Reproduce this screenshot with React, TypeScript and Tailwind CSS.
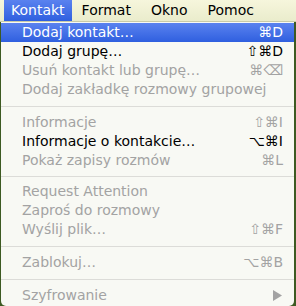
import React from "react";

type Item =
  | { kind: "item"; label: string; shortcut?: string; disabled?: boolean; active?: boolean; arrow?: boolean }
  | { kind: "sep"; h: string };

const items: Item[] = [
  { kind: "item", label: "Dodaj kontakt…", shortcut: "⌘D", active: true },
  { kind: "item", label: "Dodaj grupę…", shortcut: "⇧⌘D" },
  { kind: "item", label: "Usuń kontakt lub grupę…", shortcut: "⌘⌫", disabled: true },
  { kind: "item", label: "Dodaj zakładkę rozmowy grupowej", disabled: true },
  { kind: "sep", h: "h-[14px]" },
  { kind: "item", label: "Informacje", shortcut: "⇧⌘I", disabled: true },
  { kind: "item", label: "Informacje o kontakcie…", shortcut: "⌥⌘I" },
  { kind: "item", label: "Pokaż zapisy rozmów", shortcut: "⌘L", disabled: true },
  { kind: "sep", h: "h-[12px]" },
  { kind: "item", label: "Request Attention", disabled: true },
  { kind: "item", label: "Zaproś do rozmowy", disabled: true },
  { kind: "item", label: "Wyślij plik…", shortcut: "⇧⌘F", disabled: true },
  { kind: "sep", h: "h-[14px]" },
  { kind: "item", label: "Zablokuj…", shortcut: "⌥⌘B", disabled: true },
  { kind: "sep", h: "h-[14px]" },
  { kind: "item", label: "Szyfrowanie", disabled: true, arrow: true },
];

export default function App() {
  return (
    <div
      className="w-[296px] h-[306px] overflow-hidden bg-[#3d5a22] flex flex-col"
      style={{ fontFamily: '"DejaVu Sans", "Liberation Sans", sans-serif' }}
    >
      <div className="h-[22px] flex items-stretch bg-gradient-to-b from-[#f6f6dc] to-[#eaeccc] text-[14px] text-black border-b border-[#c9cba8]">
        <div className="ml-[4px] px-[7px] flex items-center bg-gradient-to-b from-[#5a82ef] to-[#2f5fdf] text-white">Kontakt</div>
        <div className="px-[10px] flex items-center">Format</div>
        <div className="px-[10px] flex items-center">Okno</div>
        <div className="px-[10px] flex items-center">Pomoc</div>
      </div>
      <div className="ml-[1px] mr-[2px] flex-1 bg-[#f8f9f4] rounded-b-[5px] pt-[1px] flex flex-col text-[14px]">
        {items.map((it, i) =>
          it.kind === "sep" ? (
            <div key={i} className={it.h + " flex items-center"}>
              <div className="h-px w-full bg-[#dcdcd8]" />
            </div>
          ) : (
            <div
              key={i}
              className={
                "h-[19px] flex items-center pl-[21px] pr-[11px] " +
                (it.active
                  ? "bg-gradient-to-b from-[#5a82ef] to-[#2f5fdf] text-white"
                  : it.disabled
                  ? "text-[#a3a3a3]"
                  : "text-black")
              }
            >
              <span className="flex-1 whitespace-nowrap">{it.label}</span>
              {it.shortcut && <span className="whitespace-nowrap">{it.shortcut}</span>}
              {it.arrow && (
                <svg width="10" height="11" viewBox="0 0 10 11" className="mr-[1px]">
                  <polygon points="1,0 10,5.5 1,11" fill="#a3a3a3" />
                </svg>
              )}
            </div>
          )
        )}
      </div>
    </div>
  );
}
